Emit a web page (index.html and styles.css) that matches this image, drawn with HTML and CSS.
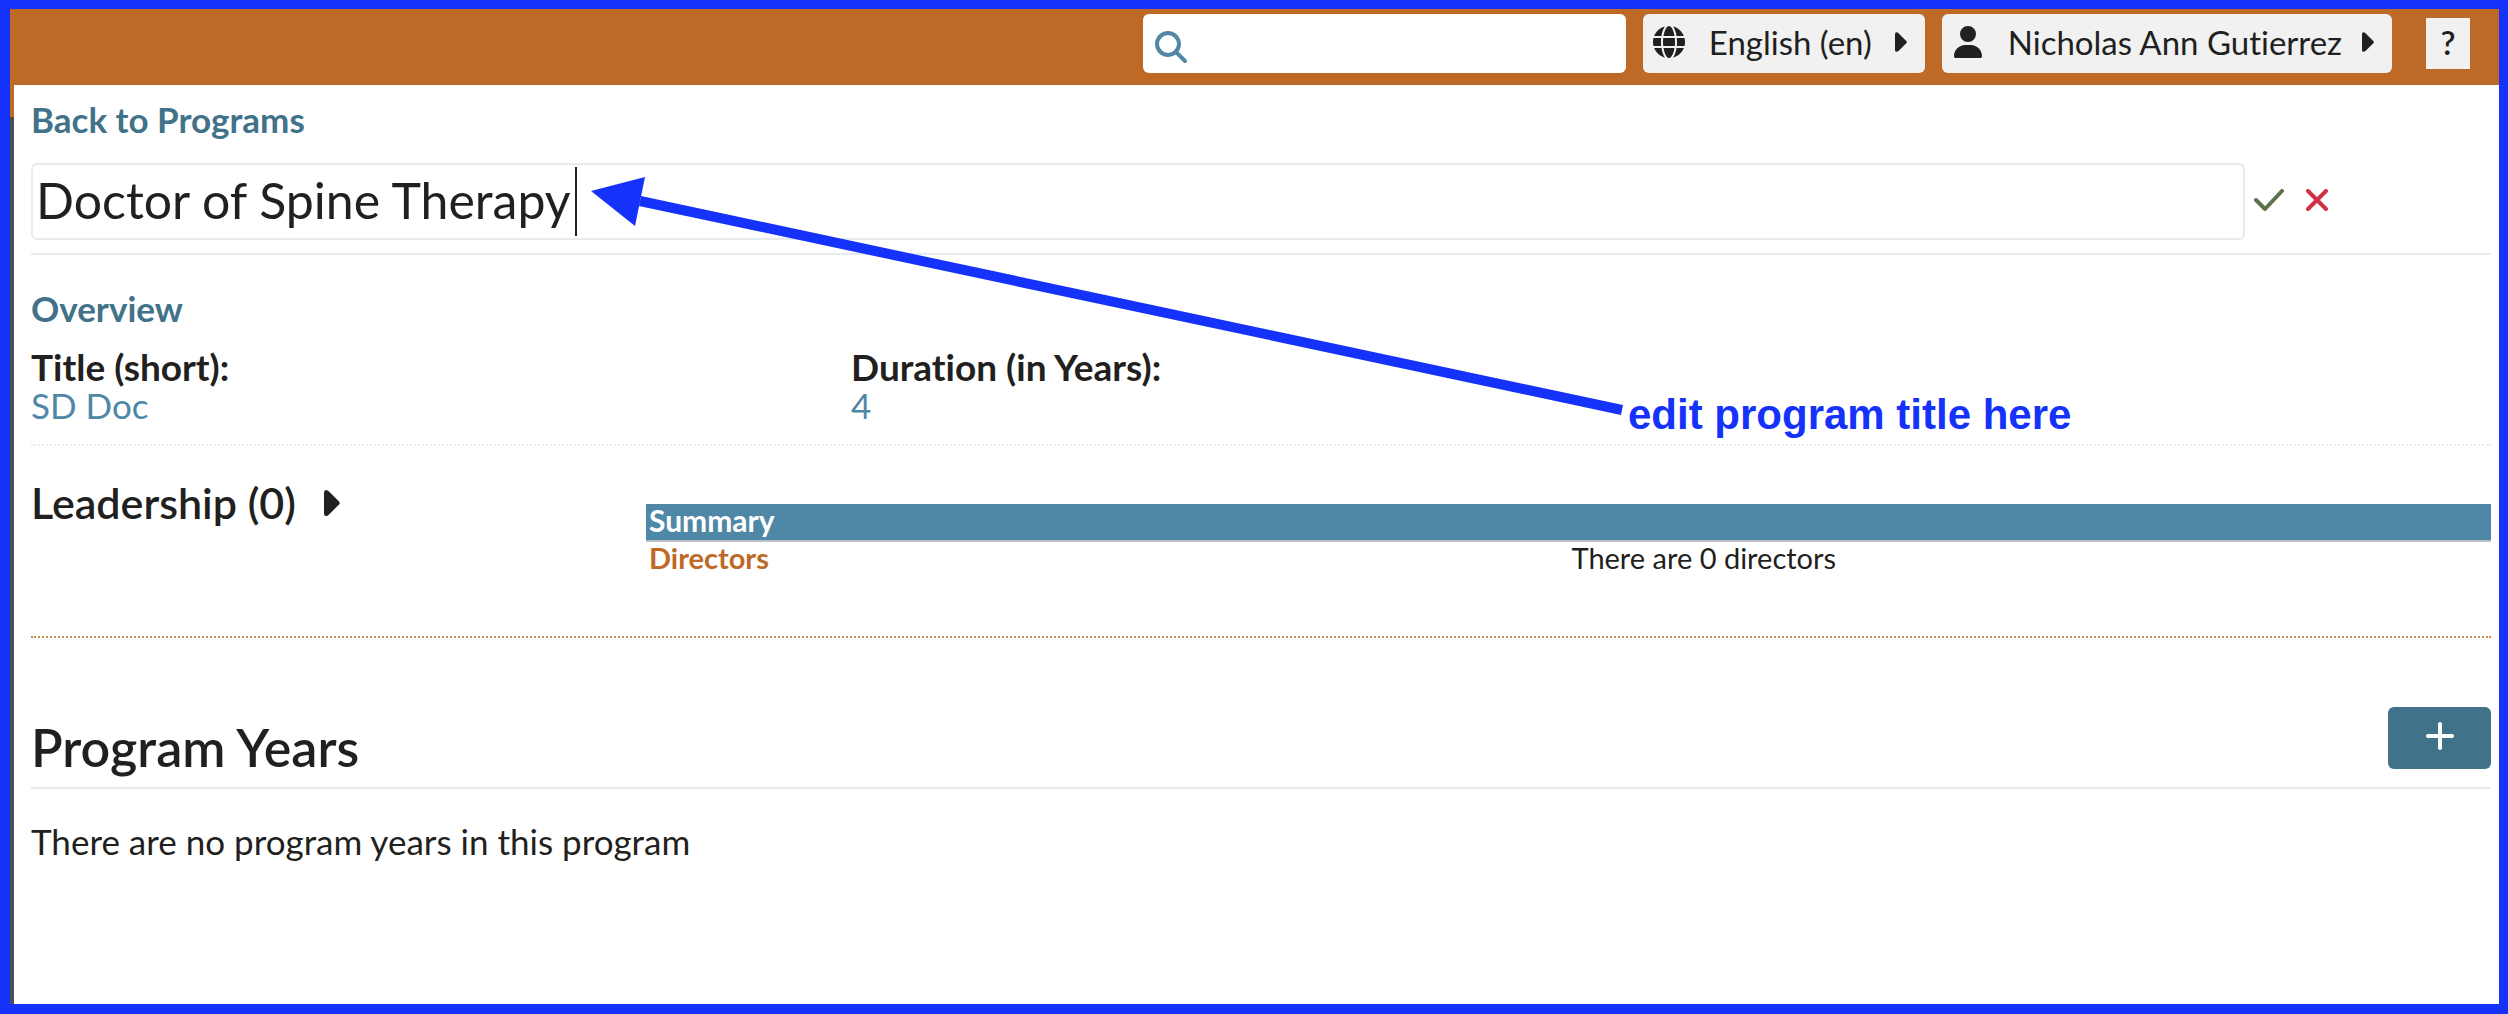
FILE: index.html
```
<!DOCTYPE html>
<html lang="en">
<head>
<meta charset="utf-8">
<title>Doctor of Spine Therapy</title>
<link rel="stylesheet" href="styles.css">
</head>
<body>
<div class="app">
  <header class="topbar">
    <div class="search">
      <svg class="search-icon" viewBox="0 0 512 512" aria-hidden="true"><path d="M416 208c0 45.900-14.900 88.300-40 122.700L502.600 457.400c12.500 12.500 12.500 32.800 0 45.300s-32.800 12.500-45.300 0L330.700 376c-34.400 25.200-76.800 40-122.700 40C93.100 416 0 322.900 0 208S93.100 0 208 0S416 93.100 416 208zM208 352a144 144 0 1 0 0-288 144 144 0 1 0 0 288z"/></svg>
      <input class="search-input" type="search" aria-label="Search">
    </div>
    <button class="menu" type="button">
      <svg class="menu-icon" viewBox="0 0 512 512" aria-hidden="true"><path d="M352 256c0 22.200-1.200 43.600-3.300 64H163.300c-2.200-20.400-3.300-41.800-3.300-64s1.200-43.600 3.300-64H348.700c2.200 20.400 3.300 41.800 3.300 64zm28.800-64H503.900c5.300 20.500 8.100 41.900 8.100 64s-2.800 43.500-8.100 64H380.800c2.100-20.600 3.200-42 3.200-64s-1.100-43.400-3.200-64zm112.600-32H376.700c-10-63.900-29.800-117.400-55.300-151.600c78.300 20.700 142 77.500 171.900 151.600zm-149.100 0H167.700c6.100-36.400 15.500-68.600 27-94.700c10.500-23.600 22.200-40.700 33.500-51.500C239.400 3.200 248.700 0 256 0s16.600 3.200 27.800 13.800c11.300 10.800 23 27.900 33.500 51.500c11.600 26 20.900 58.200 27 94.700zm-209 0H18.600C48.600 85.900 112.200 29.100 190.600 8.400C165.100 42.600 145.300 96.100 135.300 160zM8.100 192H131.200c-2.100 20.600-3.200 42-3.200 64s1.100 43.400 3.200 64H8.100C2.800 299.500 0 278.100 0 256s2.800-43.500 8.100-64zM194.700 446.600c-11.600-26-20.900-58.200-27-94.600H344.300c-6.100 36.400-15.500 68.600-27 94.600c-10.500 23.600-22.200 40.700-33.500 51.500C272.600 508.800 263.300 512 256 512s-16.600-3.200-27.800-13.800c-11.300-10.800-23-27.900-33.500-51.500zM135.300 352c10 63.900 29.800 117.400 55.300 151.600C112.200 482.900 48.600 426.100 18.600 352H135.300zm358.100 0c-30 74.100-93.600 130.900-171.900 151.600c25.500-34.200 45.200-87.700 55.300-151.600H493.400z"/></svg>
      <span>English (en)</span>
      <svg class="menu-caret" viewBox="0 0 16 26" aria-hidden="true"><path d="M0 2.500Q0 0 2 0Q3.500 0 5 1.500L15 11.500Q16.500 13 15 14.500L5 24.500Q3.500 26 2 26Q0 26 0 23.500Z"/></svg>
    </button>
    <button class="menu" type="button">
      <svg class="menu-icon" viewBox="0 0 448 512" aria-hidden="true"><path d="M224 256A128 128 0 1 0 224 0a128 128 0 1 0 0 256zm-45.700 48C79.800 304 0 383.800 0 482.300C0 498.700 13.300 512 29.700 512H418.300c16.400 0 29.700-13.300 29.700-29.700C448 383.800 368.200 304 269.700 304H178.300z"/></svg>
      <span>Nicholas Ann Gutierrez</span>
      <svg class="menu-caret" viewBox="0 0 16 26" aria-hidden="true"><path d="M0 2.500Q0 0 2 0Q3.500 0 5 1.500L15 11.500Q16.500 13 15 14.500L5 24.500Q3.500 26 2 26Q0 26 0 23.500Z"/></svg>
    </button>
    <button class="help" type="button">?</button>
  </header>

  <main class="program">
    <a class="back" href="#programs">Back to Programs</a>

    <form class="title-row">
      <div class="title-field">
        <input class="title-input" type="text" aria-label="Program title" value="Doctor of Spine Therapy">
        <span class="text-cursor"></span>
        <svg class="pointer" viewBox="0 0 1034 240" aria-hidden="true"><path d="M50 25L1032 234" fill="none" stroke="currentColor" stroke-width="10"/><path d="M1 15L55 1L45 50Z" fill="currentColor"/></svg>
        <span class="note">edit program title here</span>
      </div>
      <button class="icon-button save" type="submit" aria-label="Save">
        <svg width="30" height="22" viewBox="0 0 30 22"><path d="M2 11L11 20L28 2"/></svg>
      </button>
      <button class="icon-button cancel" type="button" aria-label="Cancel">
        <svg width="22" height="22" viewBox="0 0 22 22"><path d="M2 2L20 20M20 2L2 20"/></svg>
      </button>
    </form>

    <section class="overview">
      <h2 class="overview-heading">Overview</h2>
      <dl class="facts">
        <div>
          <dt>Title (short):</dt>
          <dd><button class="editable" type="button">SD Doc</button></dd>
        </div>
        <div>
          <dt>Duration (in Years):</dt>
          <dd><button class="editable" type="button">4</button></dd>
        </div>
      </dl>
    </section>

    <section class="leadership">
      <h2 class="leadership-heading">
        <button class="expand" type="button">Leadership (0)
          <svg class="expand-caret" viewBox="0 0 16 26" aria-hidden="true"><path d="M0 2.500Q0 0 2 0Q3.500 0 5 1.500L15 11.500Q16.500 13 15 14.500L5 24.500Q3.500 26 2 26Q0 26 0 23.500Z"/></svg>
        </button>
      </h2>
      <table class="summary">
        <thead><tr><th colspan="2">Summary</th></tr></thead>
        <tbody><tr><th scope="row">Directors</th><td>There are 0 directors</td></tr></tbody>
      </table>
    </section>

    <section class="years">
      <div class="years-header">
        <h2 class="years-heading">Program Years</h2>
        <button class="add" type="button" aria-label="Add program year">
          <svg width="28" height="28" viewBox="0 0 28 28"><path d="M14 2V26M2 14H26"/></svg>
        </button>
      </div>
      <p class="years-empty">There are no program years in this program</p>
    </section>
  </main>
</div>
</body>
</html>
```
FILE: styles.css
```
:root {
  --blue: #1532fa;
  --orange: #be6926;
  --teal: #4f88a6;
  --teal-dark: #41728a;
  --line: #e6ebef;
  --ink: #221f20;
}

* { box-sizing: border-box; }

body {
  margin: 0;
  color: var(--ink);
  font: 35px/40px Lato, "Open Sans", sans-serif;
  font-variant-ligatures: none;
}

h2, p, dl, dd { margin: 0; }

button {
  margin: 0;
  padding: 0;
  border: 0;
  background: none;
  color: inherit;
  font: inherit;
  font-variant-ligatures: none;
}

.app {
  display: flex;
  flex-direction: column;
  min-height: 100vh;
  border: solid var(--blue);
  border-width: 9px 9px 10px 10px;
}

/* Top bar */
.topbar {
  display: flex;
  align-items: flex-start;
  justify-content: flex-end;
  gap: 17px;
  padding: 5px 29px 12px;
  background: var(--orange);
  font-size: 33px;
}

.search {
  display: flex;
  align-items: center;
  gap: 12px;
  width: 483px;
  height: 59px;
  padding: 6px 12px 0;
  border-radius: 6px;
  background: #fff;
}

.search-icon {
  width: 32px;
  height: 32px;
  fill: var(--teal);
}

.search-input {
  flex: 1;
  min-width: 0;
  border: 0;
  outline: 0;
  font: inherit;
}

.menu {
  display: flex;
  align-items: center;
  height: 59px;
  padding: 0 18px 3px 10px;
  border-radius: 6px;
  background: #f1f1f1;
}

.menu span {
  min-width: 166px;
  margin: 0 20px 0 24px;
  text-align: left;
}

.menu-icon {
  width: 32px;
  height: 32px;
  fill: currentColor;
}

.menu-caret {
  width: 12px;
  height: 20px;
  fill: currentColor;
}

.help {
  width: 44px;
  height: 51px;
  margin: 4px 0 0 17px;
  padding-bottom: 3px;
  background: #f1f1f1;
  font-weight: 600;
}

/* Program page */
.program {
  flex: 1;
  padding: 14px 8px 40px 17px;
  border-left: 4px solid;
  border-image: linear-gradient(var(--orange) 32px, #4c4f50 32px) 0 0 0 1;
}

.back {
  display: block;
  width: fit-content;
  color: var(--teal-dark);
  font-weight: 700;
  text-decoration: none;
}

.title-row {
  display: flex;
  align-items: center;
  margin-top: 24px;
  padding-bottom: 13px;
  border-bottom: 2px solid var(--line);
}

.title-field {
  position: relative;
  width: 90%;
}

.title-input {
  display: block;
  width: 100%;
  height: 77px;
  padding: 0 3px 4px;
  border: 2px solid var(--line);
  border-radius: 6px;
  outline: 0;
  color: inherit;
  font: 50px Lato, "Open Sans", sans-serif;
}

.text-cursor {
  position: absolute;
  top: 4px;
  left: 544px;
  width: 2px;
  height: 69px;
  background: var(--ink);
}

/* Annotation drawn over the page */
.pointer {
  position: absolute;
  top: 13px;
  left: 559px;
  width: 1034px;
  height: 240px;
  color: var(--blue);
}

.note {
  position: absolute;
  top: 228px;
  left: 1597px;
  color: var(--blue);
  font: bold 42px/48px "Liberation Sans", Arial, sans-serif;
  white-space: nowrap;
}

.icon-button {
  display: flex;
  margin-left: 9px;
  padding-bottom: 4px;
  fill: none;
  stroke-width: 4;
  stroke-linecap: round;
  stroke-linejoin: round;
}

.save { stroke: #5b7349; }

.cancel {
  margin-left: 22px;
  stroke: #cf3148;
}

.overview {
  margin-top: 33px;
  padding-bottom: 19px;
  border-bottom: 2px dotted #ececec;
}

.overview-heading {
  color: var(--teal-dark);
  font-size: 35px;
}

.facts {
  display: grid;
  grid-template-columns: repeat(3, 1fr);
  margin-top: 19px;
  line-height: 39px;
}

.facts dt {
  font-size: 37px;
  font-weight: 700;
}

.editable {
  display: block;
  color: var(--teal);
}

.leadership {
  display: grid;
  grid-template-columns: 25% 75%;
  align-items: start;
  padding: 32px 0 58px;
  border-bottom: 2px dotted #cc8b4f;
}

.leadership-heading {
  font-size: 43px;
  line-height: 50px;
  font-weight: 600;
}

.expand {
  display: flex;
  align-items: center;
  gap: 28px;
}

.expand-caret {
  width: 16px;
  height: 26px;
  fill: currentColor;
}

.summary {
  width: 100%;
  margin-top: 26px;
  border-collapse: collapse;
  table-layout: fixed;
  font-size: 29px;
  line-height: 32px;
  text-align: left;
}

.summary th,
.summary td { padding: 0 3px 4px; }

.summary thead th {
  border-bottom: 2px solid #b9c1c7;
  background: var(--teal);
  background-clip: padding-box;
  color: #fff;
  font-size: 30px;
}

.summary tbody th { color: var(--orange); }

.years-header {
  display: flex;
  align-items: flex-end;
  justify-content: space-between;
  margin-top: 69px;
  padding-bottom: 10px;
  border-bottom: 2px solid var(--line);
}

.years-heading {
  font-size: 52px;
  line-height: 60px;
  font-weight: 600;
}

.add {
  display: flex;
  align-items: center;
  justify-content: center;
  width: 103px;
  height: 62px;
  margin-bottom: 8px;
  padding-bottom: 4px;
  border-radius: 6px;
  background: var(--teal-dark);
  fill: none;
  stroke: #fff;
  stroke-width: 4;
  stroke-linecap: round;
}

.years-empty { margin-top: 32px; }
```
